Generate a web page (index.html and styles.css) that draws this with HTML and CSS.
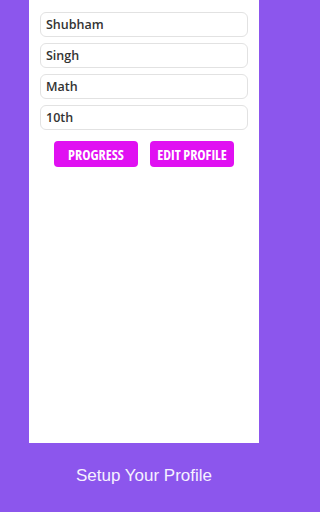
FILE: index.html
```
<!DOCTYPE html>
<html>
<head>
<meta charset="utf-8">
<link rel="stylesheet" href="styles.css">
</head>
<body>
<div class="screen">
  <div class="panel">
    <div class="fields">
      <div class="field">Shubham</div>
      <div class="field">Singh</div>
      <div class="field">Math</div>
      <div class="field">10th</div>
    </div>
    <div class="actions">
      <button class="btn">PROGRESS</button>
      <button class="btn">EDIT PROFILE</button>
    </div>
  </div>
  <div class="footer">Setup Your Profile</div>
</div>
</body>
</html>
```
FILE: styles.css
```
html, body {
  margin: 0;
  padding: 0;
}
body {
  background: #8c56ed;
  width: 288px;
  height: 512px;
  overflow: hidden;
}
.screen {
  display: flex;
  flex-direction: column;
  height: 512px;
}
.panel {
  margin: 0 29px;
  height: 443px;
  background: #ffffff;
  padding: 12px 11px 0;
  box-sizing: border-box;
}
.fields {
  display: flex;
  flex-direction: column;
  gap: 6px;
}
.field {
  height: 25px;
  box-sizing: border-box;
  border: 1px solid #e2e2e2;
  border-radius: 6px;
  padding: 0 5px;
  display: flex;
  align-items: center;
  font-family: "Open Sans", Lato, sans-serif;
  font-weight: 600;
  font-stretch: 93%;
  font-size: 12.5px;
  color: #333333;
}
.actions {
  display: flex;
  justify-content: center;
  gap: 12px;
  margin-top: 11px;
}
.btn {
  width: 84px;
  height: 26px;
  border: none;
  border-radius: 4px;
  background: #e010f2;
  color: #ffffff;
  font-family: "Open Sans", Lato, sans-serif;
  font-weight: 700;
  font-stretch: 75%;
  font-size: 14px;
  white-space: nowrap;
  padding: 0;
}
.footer {
  flex: 1;
  display: flex;
  align-items: center;
  justify-content: center;
  font-family: "Liberation Sans", Arial, sans-serif;
  font-size: 17px;
  color: #f6f1ff;
  padding-bottom: 3px;
}
```
